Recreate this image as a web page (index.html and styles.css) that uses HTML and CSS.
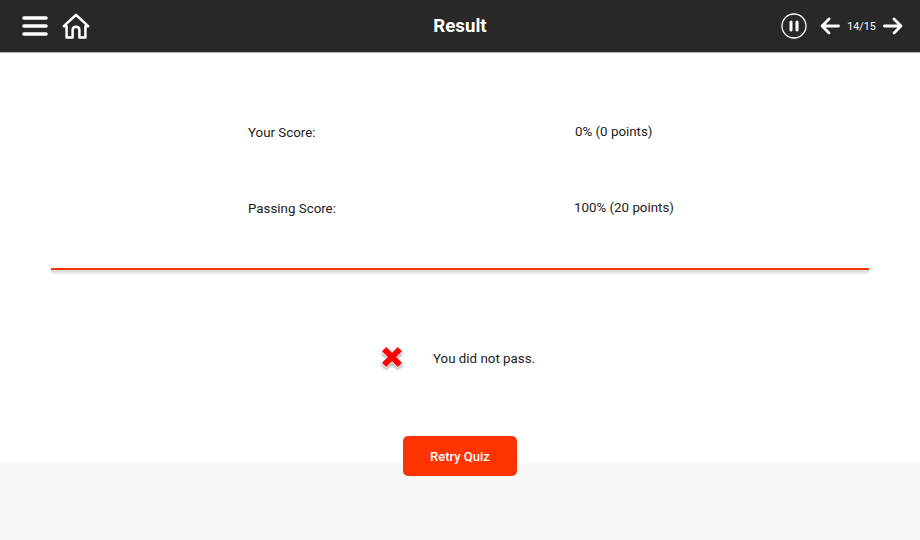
FILE: index.html
```html
<!DOCTYPE html>
<html lang="en">

<head>
    <meta charset="UTF-8">
    <title>Result</title>
    <link rel="stylesheet" href="styles.css">
</head>

<body>
    <header class="topbar">
        <div class="topLeft">
            <svg class="menuIcon" width="26" height="20" viewBox="0 0 26 20">
                <path d="M2 2H24M2 10H24M2 18H24" fill="none" stroke="#fff" stroke-width="3.6" stroke-linecap="round" />
            </svg>
            <svg class="homeIcon" width="28" height="26" viewBox="0 0 28 26">
                <path d="M1.8 13.2H4.6V24.6H10.6V17.2Q10.6 13.8 14 13.8Q17.4 13.8 17.4 17.2V24.6H23.4V13.2H26.2L14 1.8Z"
                    fill="none" stroke="#fff" stroke-width="2.5" stroke-linejoin="round" stroke-linecap="round" />
            </svg>
        </div>
        <h1 class="title">Result</h1>
        <div class="topRight">
            <svg class="pauseIcon" width="26" height="26" viewBox="0 0 26 26">
                <circle cx="13" cy="13" r="12" fill="none" stroke="#fff" stroke-width="1.3" />
                <path d="M10 9V17M16 9V17" fill="none" stroke="#fff" stroke-width="3" stroke-linecap="round" />
            </svg>
            <svg class="arrowIcon" width="20" height="18" viewBox="0 0 20 18">
                <path d="M18.5 9H2.5M9 2L2 9L9 16" fill="none" stroke="#fff" stroke-width="2.8" stroke-linecap="round" stroke-linejoin="round" />
            </svg>
            <span class="pageNum">14/15</span>
            <svg class="arrowIcon" width="20" height="18" viewBox="0 0 20 18">
                <path d="M1.5 9H17.5M11 2L18 9L11 16" fill="none" stroke="#fff" stroke-width="2.8" stroke-linecap="round" stroke-linejoin="round" />
            </svg>
        </div>
    </header>

    <main class="content">
        <div class="scoreRow">
            <span class="scoreLabel">Your Score:</span>
            <span class="scoreValue">0% (0 points)</span>
        </div>
        <div class="scoreRow passing">
            <span class="scoreLabel">Passing Score:</span>
            <span class="scoreValue">100% (20 points)</span>
        </div>
        <div class="divider"></div>
        <div class="resultRow">
            <svg class="failIcon" width="26" height="28" viewBox="0 0 26 28">
                <path class="failMark" d="M7.2 3L13 8.8L18.8 3L23 7.2L17.2 13L23 18.8L18.8 23L13 17.2L7.2 23L3 18.8L8.8 13L3 7.2Z" />
            </svg>
            <span class="resultText">You did not pass.</span>
        </div>
        <button class="retryBtn">Retry Quiz</button>
    </main>

    <div class="foot"></div>
</body>

</html>
```

FILE: styles.css
```css
* {
    box-sizing: border-box;
}

html,
body {
    height: 100%;
}

body {
    display: flex;
    flex-direction: column;
    margin: 0;
    overflow: hidden;
    background-color: #fff;
    color: #222;
    font-family: Roboto, "Liberation Sans", sans-serif;
    font-size: 13.33px;
}

.topbar {
    display: grid;
    flex: none;
    grid-template-columns: 1fr auto 1fr;
    align-items: center;
    height: 53px;
    padding: 0 17px 1px 22px;
    border-bottom: 1px solid #b5b5b5;
    background-color: #282828;
    color: #fff;
}

.topLeft,
.topRight {
    display: flex;
    align-items: center;
}

.topLeft {
    gap: 14px;
}

.topRight {
    justify-content: flex-end;
}

.title {
    margin: 0 5px 0 0;
    font-size: 18.67px;
    font-weight: 700;
}

.pauseIcon {
    margin-right: 13px;
}

.pageNum {
    width: 43px;
    padding-top: 1px;
    font-size: 10.67px;
    text-align: center;
}

.content {
    flex: none;
    height: 410px;
    padding-top: 70px;
}

.scoreRow {
    display: grid;
    grid-template-columns: 327px auto;
    align-items: center;
    height: 18px;
    margin-left: 248px;
    margin-bottom: 58px;
}

.scoreValue {
    position: relative;
    top: -1px;
}

.passing .scoreValue {
    margin-left: -1px;
}

.divider {
    height: 2px;
    margin: -7px 51px 0;
    background-color: #ff3300;
    box-shadow: 0 2px 0 #dcdcdc, 0 4px 1px #e8e8e8;
}

.resultRow {
    display: flex;
    align-items: center;
    height: 30px;
    margin: 73px 0 0 379px;
}

.failIcon {
    margin-right: 28px;
    overflow: visible;
    filter: drop-shadow(0 2px 1.5px #aaa);
}

.failMark {
    fill: #f00;
    stroke: #fff;
    stroke-width: 1.5;
    paint-order: stroke;
}

.retryBtn {
    position: relative;
    z-index: 1;
    display: block;
    width: 114px;
    height: 40px;
    margin: 63px auto 0;
    border: 0;
    border-radius: 5px;
    background-color: #ff3300;
    color: #fff;
    font-family: inherit;
    font-size: 13px;
    font-weight: 500;
}

.foot {
    flex: 1;
    background-color: #f7f7f7;
}
```
